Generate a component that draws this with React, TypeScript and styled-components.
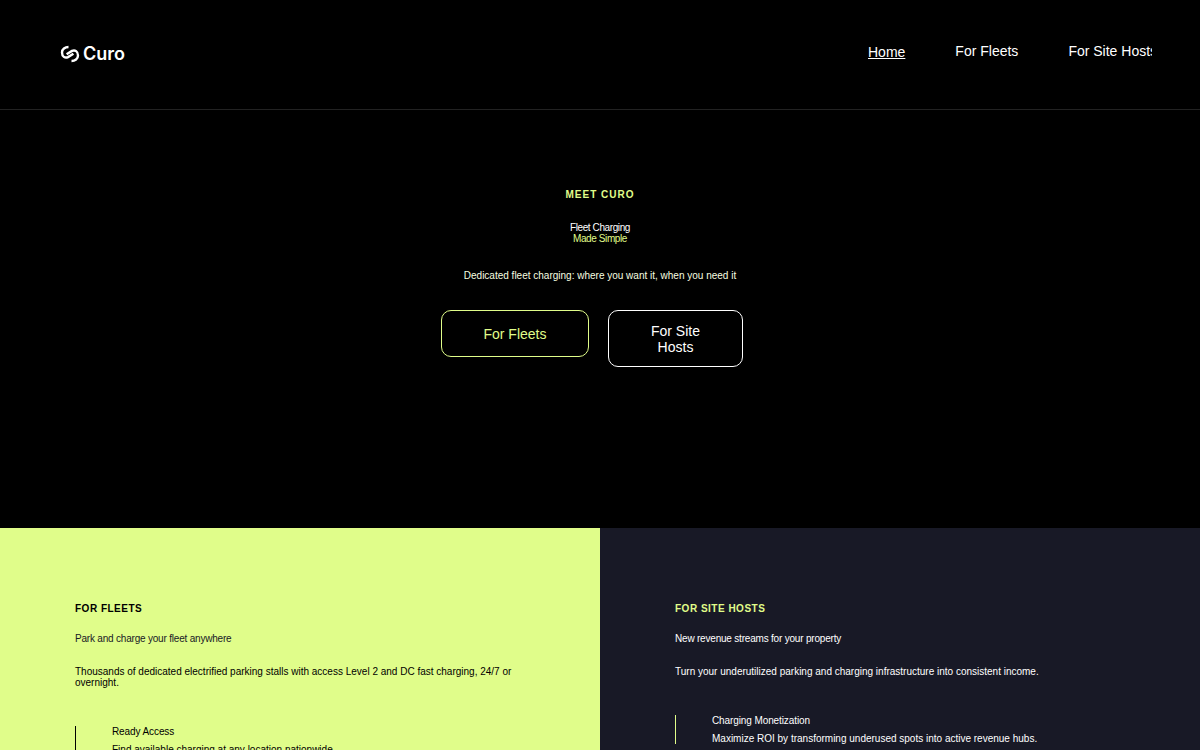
import React from "react";
import styled, { createGlobalStyle } from "styled-components";

const lime = "#e0fd8a";
const ink = "#181926";

const GlobalStyle = createGlobalStyle`
  * { box-sizing: border-box; }
  body {
    margin: 0;
    background: #000;
    color: #fff;
    font-family: "Liberation Sans", Arial, sans-serif;
    font-size: 10px;
    line-height: 11px;
  }
  h1, h2, h3, h4, p, ul { margin: 0; padding: 0; font-size: inherit; font-weight: 400; }
`;

const Header = styled.header`
  display: flex;
  justify-content: space-between;
  align-items: flex-start;
  min-height: 110px;
  padding: 43px 48px 0 60px;
  border-bottom: 1px solid #222;
`;

const Logo = styled.a`
  display: flex;
  align-items: center;
  gap: 3px;
  color: #fff;
  text-decoration: none;
  font-family: Inter, "Liberation Sans", sans-serif;
  font-size: 18px;
  font-weight: 600;
  line-height: 22px;
`;

const Nav = styled.nav`
  display: flex;
  gap: 50px;
  width: 284px;
  overflow: hidden;
`;

const NavLink = styled.a<{ $active?: boolean }>`
  flex: none;
  color: #fff;
  font-size: 14px;
  line-height: 16px;
  white-space: nowrap;
  text-decoration: ${(p) => (p.$active ? "underline" : "none")};
  padding-top: ${(p) => (p.$active ? 1 : 0)}px;
`;

const Hero = styled.section`
  display: flex;
  flex-direction: column;
  align-items: center;
  min-height: 418px;
  padding: 79px 24px 0;
  text-align: center;
`;

const Eyebrow = styled.p`
  margin-bottom: 22px;
  color: ${lime};
  font-weight: 700;
  letter-spacing: 0.1em;
`;

const HeroTitle = styled.h1`
  margin-bottom: 26px;
  letter-spacing: -0.04em;
`;

const Accent = styled.span`
  display: block;
  color: ${lime};
`;

const HeroText = styled.p`
  margin-bottom: 29px;
  color: #f7ffe0;
`;

const Actions = styled.div`
  display: flex;
  align-items: flex-start;
  gap: 19px;
  padding-right: 16px;
`;

const Action = styled.button<{ $color: string; $width: number }>`
  width: ${(p) => p.$width}px;
  min-height: 47px;
  padding: 12px 40px 11px;
  border: 1px solid ${(p) => p.$color};
  border-radius: 10px;
  background: transparent;
  color: ${(p) => p.$color};
  font-family: inherit;
  font-size: 14px;
  line-height: 16px;
  cursor: pointer;
`;

const Audiences = styled.main`
  display: grid;
  grid-template-columns: 1fr 1fr;
`;

const Panel = styled.section<{ $bg: string; $fg: string }>`
  padding: 75px;
  background: ${(p) => p.$bg};
  color: ${(p) => p.$fg};
`;

const PanelLabel = styled.h2<{ $color: string }>`
  margin-bottom: 19px;
  color: ${(p) => p.$color};
  font-weight: 700;
  letter-spacing: 0.05em;
`;

const PanelTitle = styled.h3<{ $color: string }>`
  margin-bottom: 22px;
  color: ${(p) => p.$color};
  letter-spacing: -0.02em;
`;

const PanelText = styled.p`
  margin-bottom: 38px;
`;

const Features = styled.ul`
  list-style: none;
`;

const Feature = styled.li<{ $line: string }>`
  display: flex;
  flex-direction: column;
  gap: 7px;
  padding-left: 36px;
  border-left: 1px solid ${(p) => p.$line};
`;

const FeatureTitle = styled.h4`
  letter-spacing: -0.01em;
`;

function CuroMark() {
  return (
    <svg width="20" height="18" viewBox="0 0 20 18" fill="none" stroke="#fff" strokeWidth="2.4" aria-hidden="true">
      <path d="M8.5 2 C5 2 2 4.3 2 7.5 C2 11.6 5 13.5 8 12.1 L13.4 8.8" />
      <path d="M11.5 16 C15 16 18 13.7 18 10.5 C18 6.4 15 4.5 12 5.9 L6.6 9.2" />
    </svg>
  );
}

export default function App() {
  return (
    <>
      <GlobalStyle />
      <Header>
        <Logo href="#">
          <CuroMark />
          Curo
        </Logo>
        <Nav>
          <NavLink href="#" $active>Home</NavLink>
          <NavLink href="#fleets">For Fleets</NavLink>
          <NavLink href="#hosts">For Site Hosts</NavLink>
        </Nav>
      </Header>
      <Hero>
        <Eyebrow>MEET CURO</Eyebrow>
        <HeroTitle>
          Fleet Charging <Accent>Made Simple</Accent>
        </HeroTitle>
        <HeroText>Dedicated fleet charging: where you want it, when you need it</HeroText>
        <Actions>
          <Action $color={lime} $width={148}>For Fleets</Action>
          <Action $color="#fff" $width={135}>For Site Hosts</Action>
        </Actions>
      </Hero>
      <Audiences>
        <Panel id="fleets" $bg={lime} $fg="#000">
          <PanelLabel $color="#000">FOR FLEETS</PanelLabel>
          <PanelTitle $color={ink}>Park and charge your fleet anywhere</PanelTitle>
          <PanelText>
            Thousands of dedicated electrified parking stalls with access Level 2 and DC fast charging, 24/7 or
            overnight.
          </PanelText>
          <Features>
            <Feature $line="#000">
              <FeatureTitle>Ready Access</FeatureTitle>
              <p>Find available charging at any location nationwide.</p>
            </Feature>
          </Features>
        </Panel>
        <Panel id="hosts" $bg={ink} $fg="#fff">
          <PanelLabel $color={lime}>FOR SITE HOSTS</PanelLabel>
          <PanelTitle $color="#fff">New revenue streams for your property</PanelTitle>
          <PanelText>Turn your underutilized parking and charging infrastructure into consistent income.</PanelText>
          <Features>
            <Feature $line={lime}>
              <FeatureTitle>Charging Monetization</FeatureTitle>
              <p>Maximize ROI by transforming underused spots into active revenue hubs.</p>
            </Feature>
          </Features>
        </Panel>
      </Audiences>
    </>
  );
}
